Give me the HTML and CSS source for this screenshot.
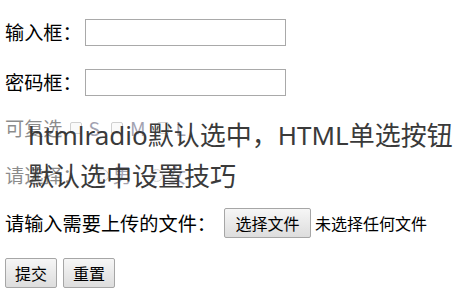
FILE: index.html
```html
<!DOCTYPE html>
<html lang="zh-CN">
<head>
<meta charset="utf-8">
<title>htmlradio默认选中</title>
<link rel="stylesheet" href="styles.css">
</head>
<body>
<form class="form">
  <div class="row r1">
    <label class="label">输入框：</label>
    <input class="text-input" type="text">
  </div>
  <div class="row r2">
    <label class="label">密码框：</label>
    <input class="text-input" type="password">
  </div>
  <div class="row r3 faded">
    <span class="label">可复选</span>
    <span class="check"></span><span class="opt">S</span>
    <span class="check"></span><span class="opt">M</span>
    <span class="check"></span><span class="opt">L</span>
  </div>
  <div class="row r4 faded">
    <span class="label">请选择：</span>
    <span class="radio"></span><span class="opt">男</span>
    <span class="radio"></span><span class="opt">女</span>
  </div>
  <div class="row r5">
    <span class="label">请输入需要上传的文件：</span>
    <span class="btn file-btn">选择文件</span>
    <span class="file-name">未选择任何文件</span>
  </div>
  <div class="row r6">
    <span class="btn">提交</span>
    <span class="btn">重置</span>
  </div>
</form>
<div class="title">htmlradio默认选中，HTML单选按钮默认选中设置技巧</div>
</body>
</html>
```
FILE: styles.css
```css
html, body {
  margin: 0;
  padding: 0;
  background: #fff;
}
body {
  position: relative;
  width: 469px;
  height: 298px;
  overflow: hidden;
  font-family: "Noto Sans CJK SC", "Noto Sans", sans-serif;
  font-size: 19.2px;
  color: #000;
}
.form {
  display: flex;
  flex-direction: column;
  padding: 17px 0 0 5px;
}
.row {
  display: flex;
  align-items: center;
  height: 30px;
  line-height: 30px;
  white-space: nowrap;
}
.r2 { margin-top: 20px; }
.r3 { margin-top: 16px; }
.r4 { margin-top: 17px; }
.r5 { margin-top: 18px; }
.r6 { margin-top: 20px; }
.label {
  display: inline-block;
}
.text-input {
  box-sizing: border-box;
  width: 201px;
  height: 27px;
  margin: 0 0 0 3px;
  border: 1px solid #a9a9a9;
  padding: 0 3px;
  font-size: 16px;
  outline: none;
}
.faded {
  opacity: 0.45;
}
.check {
  display: inline-block;
  box-sizing: border-box;
  width: 12px;
  height: 12px;
  margin: 0 7px 0 7px;
  border: 1px solid #999;
  border-radius: 2px;
  background: #f4f4f4;
}
.radio {
  display: inline-block;
  box-sizing: border-box;
  width: 13px;
  height: 13px;
  margin: 0 4px 0 14px;
  border: 1px solid #999;
  border-radius: 50%;
  background: #f4f4f4;
}
.opt {
  margin-right: 4px;
  color: #335;
}
.btn {
  display: inline-flex;
  align-items: center;
  justify-content: center;
  box-sizing: border-box;
  height: 30px;
  padding: 0 9px;
  border: 1px solid #a6a6a6;
  border-radius: 2px;
  background: linear-gradient(#f6f6f6, #dddddd);
  font-size: 16px;
  line-height: 1;
  color: #000;
}
.r6 .btn + .btn { margin-left: 6px; }
.file-btn {
  margin-left: 8px;
  width: 87px;
}
.file-name {
  margin-left: 4px;
  font-size: 16px;
}
.title {
  position: absolute;
  left: 28px;
  top: 115px;
  width: 430px;
  font-family: "Noto Sans", "Noto Sans CJK SC", sans-serif;
  font-size: 26px;
  line-height: 41px;
  color: #3a3a3a;
}
```
